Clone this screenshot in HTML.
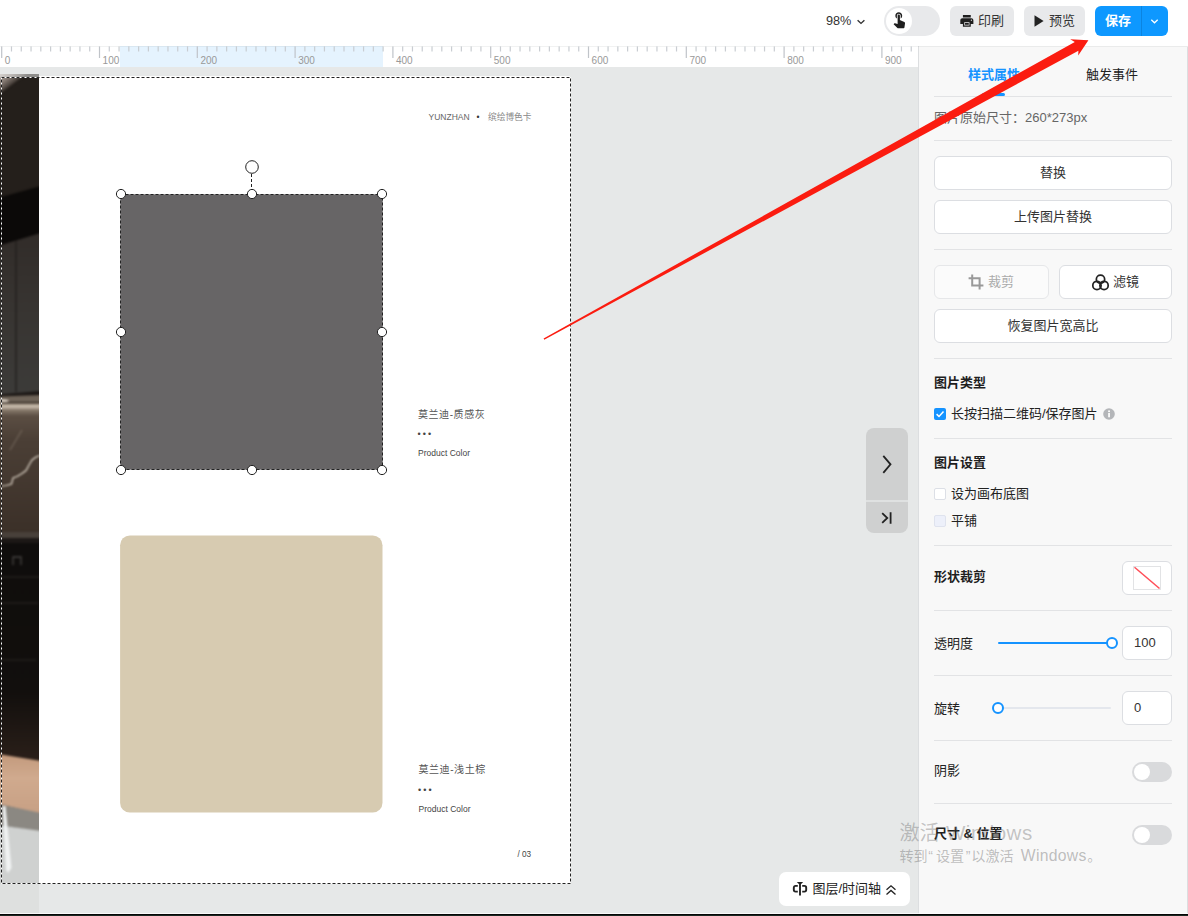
<!DOCTYPE html>
<html lang="zh-CN">
<head>
<meta charset="utf-8">
<title>编辑器</title>
<style>
*{box-sizing:border-box;margin:0;padding:0}
html,body{width:1188px;height:916px;overflow:hidden;background:#e6e8e8}
body{position:relative;font-family:"Liberation Sans","Noto Sans CJK SC",sans-serif;font-size:13px;color:#222;-webkit-font-smoothing:antialiased}
.abs{position:absolute}
/* ---------- top bar ---------- */
#topbar{position:absolute;left:0;top:0;width:1188px;height:46px;background:#fff}
#topline{position:absolute;left:0;top:46px;width:1188px;height:1px;background:rgba(120,125,130,.10)}
.tbtn{position:absolute;top:6px;height:30px;border-radius:6px;background:#e8e9eb;color:#333;font-size:13px;line-height:30px;white-space:nowrap}
#zoom{position:absolute;left:826px;top:6px;height:30px;line-height:30px;font-size:12.700px;color:#333}
#pill{position:absolute;left:884px;top:6px;width:56px;height:30px;border-radius:15px;background:#e8e9eb}
#pill i{position:absolute;left:2px;top:2px;width:26px;height:26px;border-radius:13px;background:#fff}
#save{position:absolute;left:1095px;top:6px;width:73px;height:30px;border-radius:6px;background:#0e98ff;color:#fff;font-size:13px;font-weight:bold;line-height:30px}
#save b{position:absolute;left:46px;top:0;width:1px;height:30px;background:#0b84e0}
/* ---------- ruler ---------- */
#ruler{position:absolute;left:0;top:46px;width:918px;height:21px;background:#fff;overflow:hidden}
#ruler .hl{position:absolute;left:120px;top:0;width:263px;height:21px;background:#e5f3fe}
/* ---------- stage ---------- */
#stage{position:absolute;left:0;top:67px;width:918px;height:849px;background:#e6e8e8;overflow:hidden}
#page{position:absolute;left:39px;top:9px;width:531px;height:808px;background:#fff}
/* ---------- panel ---------- */
#panel{position:absolute;left:918px;top:46px;width:270px;height:870px;background:#f8f8f8;border-left:1px solid #dcdee0}
.hr{position:absolute;left:15px;width:238px;height:1px;background:#e2e3e5}
.pbtn{position:absolute;height:34px;border:1px solid #dcdee2;border-radius:6px;background:#fff;color:#333;font-size:13px;line-height:32px;text-align:center;white-space:nowrap}
.lbl{position:absolute;left:15px;font-size:13px;line-height:20px;color:#222;white-space:nowrap}
.lbl.b{font-weight:bold;color:#1f1f1f}
.ptxt{position:absolute;white-space:nowrap;line-height:12px;height:12px}
#botline{position:absolute;left:0;top:913px;width:1188px;height:3px;background:linear-gradient(to bottom,rgba(255,255,255,.75) 0,rgba(255,255,255,.75) 1px,#060606 1px,#060606 2px,#1a2720 2px,#1a2720 3px)}
</style>
</head>
<body>
<div id="topbar">
  <div id="zoom">98%</div>
  <svg class="abs" style="left:856px;top:17.600px" width="10" height="8" viewBox="0 0 10 8"><path d="M1.6 2.2 L5 5.4 L8.4 2.2" fill="none" stroke="#333" stroke-width="1.4"/></svg>
  <div id="pill"><i></i>
    <svg class="abs" style="left:5.700px;top:4.300px" width="18.300" height="18.300" viewBox="0 0 24 24"><path fill="#1f1f1f" d="M9 11.240V7.500C9 6.120 10.120 5 11.500 5S14 6.120 14 7.500v3.740c1.210-.81 2-2.180 2-3.740C16 5.010 13.990 3 11.500 3S7 5.010 7 7.500c0 1.560.79 2.930 2 3.740zm9.840 4.630l-4.540-2.260c-.17-.07-.35-.11-.54-.11H13v-6c0-.83-.67-1.500-1.500-1.500S10 6.670 10 7.500v10.740l-3.430-.72c-.08-.01-.15-.03-.24-.03-.31 0-.59.13-.79.33l-.79.8 4.940 4.940c.27.27.65.44 1.060.44h6.790c.75 0 1.330-.55 1.440-1.280l.75-5.270c.01-.07.02-.14.020-.2 0-.62-.38-1.160-.91-1.380z"/></svg>
  </div>
  <div class="tbtn" style="left:950px;width:64px">
    <svg class="abs" style="left:8.500px;top:6.900px" width="15.700" height="15.700" viewBox="0 0 24 24"><path fill="#1f1f1f" d="M19 8H5c-1.660 0-3 1.340-3 3v6h4v4h12v-4h4v-6c0-1.660-1.340-3-3-3zm-3 11H8v-5h8v5zm3-7c-.55 0-1-.45-1-1s.45-1 1-1 1 .45 1 1-.45 1-1 1zm-1-9H6v4h12V3z"/><rect x="9" y="15.200" width="6" height="2.900" rx=".5" fill="#1f1f1f"/></svg>
    <span class="abs" style="left:28px;top:0">印刷</span>
  </div>
  <div class="tbtn" style="left:1024px;width:61px">
    <svg class="abs" style="left:10px;top:9px" width="10" height="12" viewBox="0 0 10 12"><path d="M0.500 0.300 L9.600 6 L0.500 11.700z" fill="#222"/></svg>
    <span class="abs" style="left:25px;top:0">预览</span>
  </div>
  <div id="save"><span class="abs" style="left:10px;top:0">保存</span><b></b>
    <svg class="abs" style="left:55px;top:12px" width="9" height="7" viewBox="0 0 9 7"><path d="M1.300 1.800 L4.500 4.800 L7.700 1.800" fill="none" stroke="#fff" stroke-width="1.300"/></svg>
  </div>
</div>
<div id="ruler"><div class="hl"></div><svg class="abs" style="left:0;top:0" width="918" height="21" viewBox="0 0 918 21" font-family="Liberation Sans, sans-serif" font-size="10" fill="#999"><path d="M11.48 0.5V5.5M21.26 0.5V5.5M31.04 0.5V5.5M40.82 0.5V5.5M50.60 0.5V5.5M60.38 0.5V5.5M70.16 0.5V5.5M79.94 0.5V5.5M89.72 0.5V5.5M109.28 0.5V5.5M119.06 0.5V5.5M128.84 0.5V5.5M138.62 0.5V5.5M148.40 0.5V5.5M158.18 0.5V5.5M167.96 0.5V5.5M177.74 0.5V5.5M187.52 0.5V5.5M207.08 0.5V5.5M216.86 0.5V5.5M226.64 0.5V5.5M236.42 0.5V5.5M246.20 0.5V5.5M255.98 0.5V5.5M265.76 0.5V5.5M275.54 0.5V5.5M285.32 0.5V5.5M304.88 0.5V5.5M314.66 0.5V5.5M324.44 0.5V5.5M334.22 0.5V5.5M344.00 0.5V5.5M353.78 0.5V5.5M363.56 0.5V5.5M373.34 0.5V5.5M383.12 0.5V5.5M402.68 0.5V5.5M412.46 0.5V5.5M422.24 0.5V5.5M432.02 0.5V5.5M441.80 0.5V5.5M451.58 0.5V5.5M461.36 0.5V5.5M471.14 0.5V5.5M480.92 0.5V5.5M500.48 0.5V5.5M510.26 0.5V5.5M520.04 0.5V5.5M529.82 0.5V5.5M539.60 0.5V5.5M549.38 0.5V5.5M559.16 0.5V5.5M568.94 0.5V5.5M578.72 0.5V5.5M598.28 0.5V5.5M608.06 0.5V5.5M617.84 0.5V5.5M627.62 0.5V5.5M637.40 0.5V5.5M647.18 0.5V5.5M656.96 0.5V5.5M666.74 0.5V5.5M676.52 0.5V5.5M696.08 0.5V5.5M705.86 0.5V5.5M715.64 0.5V5.5M725.42 0.5V5.5M735.20 0.5V5.5M744.98 0.5V5.5M754.76 0.5V5.5M764.54 0.5V5.5M774.32 0.5V5.5M793.88 0.5V5.5M803.66 0.5V5.5M813.44 0.5V5.5M823.22 0.5V5.5M833.00 0.5V5.5M842.78 0.5V5.5M852.56 0.5V5.5M862.34 0.5V5.5M872.12 0.5V5.5M891.68 0.5V5.5M901.46 0.5V5.5M911.24 0.5V5.5" stroke="#c9cdd2" stroke-width="1.200" fill="none"/><path d="M1.70 0.5V12M99.50 0.5V12M197.30 0.5V12M295.10 0.5V12M392.90 0.5V12M490.70 0.5V12M588.50 0.5V12M686.30 0.5V12M784.10 0.5V12M881.90 0.5V12" stroke="#c0c4c9" stroke-width="1.200" fill="none"/><text x="4.8" y="17.900">0</text><text x="102.6" y="17.900">100</text><text x="200.4" y="17.900">200</text><text x="298.2" y="17.900">300</text><text x="396.0" y="17.900">400</text><text x="493.8" y="17.900">500</text><text x="591.6" y="17.900">600</text><text x="689.4" y="17.900">700</text><text x="787.2" y="17.900">800</text><text x="885.0" y="17.900">900</text></svg></div>
<div id="stage">
  <div id="page"></div>
  <!-- photo strip on the left (kitchen photo, cropped) : global x0..39, y74..916 -->
  <svg class="abs" style="left:0;top:7px" width="39" height="842" viewBox="0 74 39 842" preserveAspectRatio="none">
    <defs>
      <filter id="bl" x="-20%" y="-5%" width="140%" height="110%" color-interpolation-filters="sRGB"><feGaussianBlur stdDeviation="0.8"/></filter>
      <linearGradient id="gcab" x1="0" y1="0" x2="0" y2="1"><stop offset="0" stop-color="#312c29"/><stop offset="0.5" stop-color="#383532"/><stop offset="1" stop-color="#3c3b39"/></linearGradient>
      <linearGradient id="gtop" gradientUnits="userSpaceOnUse" x1="0" y1="403" x2="0" y2="533"><stop offset="0" stop-color="#8a7d6e"/><stop offset="0.026" stop-color="#cfc3b4"/><stop offset="0.055" stop-color="#85786a"/><stop offset="0.100" stop-color="#5b4e43"/><stop offset="0.280" stop-color="#4b3f36"/><stop offset="1" stop-color="#3b3028"/></linearGradient>
      <linearGradient id="gcor" x1="0" y1="0" x2="1" y2="1"><stop offset="0" stop-color="#d6cbc3"/><stop offset="0.280" stop-color="#8a7f78"/><stop offset="0.520" stop-color="#3a332e"/><stop offset="0.800" stop-color="#241f1b"/></linearGradient>
      <linearGradient id="gblk" x1="0" y1="0" x2="0" y2="1"><stop offset="0" stop-color="#0f0d0c"/><stop offset="0.700" stop-color="#120f0d"/><stop offset="1" stop-color="#2a1f19"/></linearGradient>
      <linearGradient id="gwood" x1="0" y1="0" x2="0" y2="1"><stop offset="0" stop-color="#c39a7d"/><stop offset="0.400" stop-color="#d0aa8e"/><stop offset="1" stop-color="#c7a084"/></linearGradient>
    </defs>
    <rect x="0" y="74" width="39" height="842" fill="#241f1b"/>
    <g filter="url(#bl)">
      <polygon points="-2,72 29,72 -2,95" fill="url(#gcor)"/>
      <polygon points="-2,198 41,186 41,233 -2,246" fill="#0b0908"/>
      <polygon points="-2,246 41,233 41,392 -2,395" fill="url(#gcab)"/>
      <path d="M16 240V392" stroke="#1f1c1a" stroke-width="1.200"/>
      <polygon points="-2,394.500 41,391 41,395.500 -2,397" fill="#1c1715"/>
      <polygon points="-2,396.500 41,395 41,402.500 -2,403" fill="#6e6358"/>
      <ellipse cx="3" cy="400.800" rx="6" ry="1.300" fill="#f3eade"/>
      <rect x="-2" y="402" width="43" height="1.600" fill="#2b221c"/>
      <rect x="-2" y="403.300" width="43" height="130" fill="url(#gtop)"/>
      <polyline points="-1,486.500 6,485.500 11.500,484 13,478 17,476.500 22,473.500 26,470.500 29,465 32,460 36,457 40,455.500" fill="none" stroke="#e9e0d3" stroke-width="1.150"/>
      <path d="M22 430 L10 450" stroke="#85786c" stroke-width="0.800"/>
      <rect x="-2" y="532" width="43" height="228" fill="url(#gblk)"/>
      <rect x="-2" y="532" width="43" height="6" fill="#48403a"/>
      <rect x="-2" y="538" width="43" height="5" fill="#1c1816"/>
      <path d="M-2 577H41M-2 603H38M-2 660H36" stroke="#221f1d" stroke-width="1.600"/>
      <path d="M13 565V557H21V565" stroke="#444240" stroke-width="1.300" fill="none"/>
      <polygon points="-2,754 41,761 41,814 -2,804" fill="url(#gwood)"/>
      <polygon points="-2,804 41,813 41,832 -2,825" fill="#8b8882"/>
      <polygon points="-2,825 41,831 41,918 -2,918" fill="#cfd1d0"/>
      <polygon points="2.500,806 5.500,806 11.500,868 8,873 6,870" fill="#f1f3f3"/>
    </g>
    <rect x="0" y="74" width="39" height="3.500" fill="#e6e8e8" opacity="0.550"/>
    <rect x="0" y="884" width="39" height="32" fill="#e6e8e8" opacity="0.620"/>
  </svg>
  <!-- page dashed outline -->
  <svg class="abs" style="left:0;top:0" width="918" height="849" viewBox="0 67 918 849">
    <rect x="1.500" y="77.500" width="569" height="806" fill="none" stroke="#fff" stroke-width="1"/>
    <rect x="1.500" y="77.500" width="569" height="806" fill="none" stroke="#222" stroke-width="1" stroke-dasharray="3 2"/>
  </svg>
  <!-- colour swatches -->
  <div class="abs" style="left:120px;top:127px;width:263px;height:276px;background:#676566"></div>
  <svg class="abs" style="left:0;top:0" width="918" height="849" viewBox="0 67 918 849"><rect x="120.100" y="535.500" width="262.400" height="277" rx="9.800" fill="#d7cbb1"/></svg>
  <!-- selection frame + handles -->
  <svg class="abs" style="left:0;top:0" width="918" height="849" viewBox="0 67 918 849">
    <rect x="120.500" y="194.500" width="262" height="275" fill="none" stroke="#fff" stroke-opacity=".32" stroke-width="1"/><rect x="120.500" y="194.500" width="262" height="275" fill="none" stroke="#222" stroke-width="1" stroke-dasharray="3 2"/>
    <path d="M251.500 174V190" stroke="#222" stroke-width="1" stroke-dasharray="3 2"/>
    <g fill="#fff" stroke="#222" stroke-width="1">
      <circle cx="252" cy="167" r="6.300"/>
      <circle cx="121" cy="194" r="4.600"/><circle cx="252" cy="194" r="4.600"/><circle cx="382" cy="194" r="4.600"/>
      <circle cx="121" cy="332" r="4.600"/><circle cx="382" cy="332" r="4.600"/>
      <circle cx="121" cy="470" r="4.600"/><circle cx="252" cy="470" r="4.600"/><circle cx="382" cy="470" r="4.600"/>
    </g>
  </svg>
  <!-- page texts -->
  <div class="ptxt" style="left:428.500px;top:44px;font-size:8.500px;color:#666">YUNZHAN</div>
  <div class="ptxt" style="left:476.500px;top:44px;font-size:8.500px;color:#333">•</div>
  <div class="ptxt" style="left:488px;top:44px;font-size:8.700px;color:#888">缤绘博色卡</div>
  <div class="ptxt" style="left:418px;top:342px;font-size:10px;color:#555;letter-spacing:.56px">莫兰迪-质感灰</div>
  <div class="ptxt" style="left:417.500px;top:361px;font-size:9px;color:#444;letter-spacing:2.100px">•••</div>
  <div class="ptxt" style="left:418px;top:380px;font-size:8.500px;color:#444">Product Color</div>
  <div class="ptxt" style="left:418.500px;top:697px;font-size:10px;color:#555;letter-spacing:.56px">莫兰迪-浅土棕</div>
  <div class="ptxt" style="left:418px;top:716.500px;font-size:9px;color:#444;letter-spacing:2.100px">•••</div>
  <div class="ptxt" style="left:418.500px;top:736px;font-size:8.500px;color:#444">Product Color</div>
  <div class="ptxt" style="left:517.500px;top:782.400px;font-size:8.200px;color:#444">/ 03</div>
  <!-- collapse control -->
  <div class="abs" style="left:866px;top:361px;width:42px;height:105px;border-radius:8px;background:#cfd0d0">
    <div class="abs" style="left:0;top:72px;width:42px;height:2px;background:#dfe1e1"></div>
    <svg class="abs" style="left:14px;top:26px" width="14" height="20" viewBox="0 0 14 20"><path d="M3.300 1.800 L10.500 10.300 L3.300 18.800" fill="none" stroke="#222" stroke-width="1.800"/></svg>
    <svg class="abs" style="left:14px;top:82.700px" width="14" height="14" viewBox="0 0 14 14"><path d="M2.200 2.200 L7.300 7 L2.200 11.800 M10.600 1.300 V12.700" fill="none" stroke="#222" stroke-width="1.800"/></svg>
  </div>
  <!-- layers / timeline button -->
  <div class="abs" style="left:779px;top:805px;width:131px;height:34px;border-radius:7px;background:#fff">
    <svg class="abs" style="left:13px;top:9px" width="16" height="16" viewBox="0 0 16 16"><path d="M4.800 0.900h6.400l-2 2.200h-2.400z" fill="#222"/><path d="M8 2V14.600" stroke="#222" stroke-width="1.900" fill="none"/><path d="M5.800 4.900H3.600c-1.100 0-1.800.7-1.800 1.800v2.100c0 1.100.7 1.800 1.800 1.800h2.200M10.200 4.900h2.200c1.100 0 1.800.7 1.800 1.800v2.100c0 1.100-.7 1.800-1.800 1.800h-2.200" stroke="#222" stroke-width="1.900" fill="none"/></svg>
    <span class="abs" style="left:33.500px;top:7.500px;font-size:13px;line-height:18px;color:#222;white-space:nowrap">图层/时间轴</span>
    <svg class="abs" style="left:106px;top:11.800px" width="12" height="12" viewBox="0 0 12 12"><path d="M1.500 5.800 L6 1.800 L10.500 5.800 M1.500 10.400 L6 6.400 L10.500 10.400" fill="none" stroke="#222" stroke-width="1.300"/></svg>
  </div>
</div>
<div id="panel">
  <!-- tabs -->
  <div class="lbl b" style="left:49px;top:19px;color:#1593ff">样式属性</div>
  <div class="lbl" style="left:167px;top:19px">触发事件</div>
  <div class="abs" style="left:63px;top:47px;width:23px;height:3px;border-radius:2px;background:#1593ff"></div>
  <div class="hr" style="top:50px"></div>
  <div class="lbl" style="top:62px;color:#666">图片原始尺寸：260*273px</div>
  <div class="hr" style="top:94px"></div>
  <div class="pbtn" style="left:15px;top:110px;width:238px">替换</div>
  <div class="pbtn" style="left:15px;top:154px;width:238px">上传图片替换</div>
  <div class="hr" style="top:203px"></div>
  <div class="pbtn" style="left:15px;top:219px;width:115px;color:#aaa;background:#fbfbfb;border-color:#e6e7e9">
    <svg class="abs" style="left:33px;top:8px" width="16" height="16" viewBox="0 0 16 16"><path d="M4.200 0.600V11.600H15.400M0.600 4.200H11.600V15.400" fill="none" stroke="#999" stroke-width="2"/></svg>
    <span class="abs" style="left:53px;top:0">裁剪</span>
  </div>
  <div class="pbtn" style="left:140px;top:219px;width:113px">
    <svg class="abs" style="left:31px;top:6.500px" width="19" height="19" viewBox="-1 -1 19 19"><g fill="none" stroke="#222" stroke-width="1.750"><circle cx="8.500" cy="5.200" r="4.150"/><circle cx="4.950" cy="11.400" r="4.150"/><circle cx="12.050" cy="11.400" r="4.150"/></g></svg>
    <span class="abs" style="left:53px;top:0">滤镜</span>
  </div>
  <div class="pbtn" style="left:15px;top:263px;width:238px">恢复图片宽高比</div>
  <div class="hr" style="top:312px"></div>
  <div class="lbl b" style="top:327px">图片类型</div>
  <div class="abs" style="left:15px;top:362px;width:12px;height:12px;border-radius:2px;background:#1593ff">
    <svg class="abs" style="left:1px;top:1px" width="10" height="10" viewBox="0 0 10 10"><path d="M1.600 5.100 L4 7.500 L8.500 2.600" fill="none" stroke="#fff" stroke-width="1.500"/></svg>
  </div>
  <div class="lbl" style="left:32px;top:358px">长按扫描二维码/保存图片</div>
  <svg class="abs" style="left:184px;top:362px" width="12" height="12" viewBox="0 0 12 12"><circle cx="6" cy="6" r="5.800" fill="#b4b6b9"/><rect x="5.200" y="5" width="1.700" height="4.300" fill="#fff"/><circle cx="6.050" cy="3.200" r="1" fill="#fff"/></svg>
  <div class="hr" style="top:392px"></div>
  <div class="lbl b" style="top:407px">图片设置</div>
  <div class="abs" style="left:15px;top:442px;width:12px;height:12px;border-radius:2px;background:#fff;border:1px solid #dcdfe6"></div>
  <div class="lbl" style="left:32px;top:438px">设为画布底图</div>
  <div class="abs" style="left:15px;top:469px;width:12px;height:12px;border-radius:2px;background:#edf0fa;border:1px solid #dfe3ee"></div>
  <div class="lbl" style="left:32px;top:465px">平铺</div>
  <div class="hr" style="top:499px"></div>
  <div class="lbl b" style="top:521px">形状裁剪</div>
  <div class="pbtn" style="left:203px;top:515px;width:50px">
    <svg class="abs" style="left:10px;top:4px" width="29" height="25" viewBox="0 0 29 25"><rect x="0.500" y="0.500" width="27" height="23" fill="#fff" stroke="#e2e3e5"/><path d="M1.500 1.200 L26.500 22.500" stroke="#ff4d57" stroke-width="1.500"/></svg>
  </div>
  <div class="hr" style="top:564px"></div>
  <div class="lbl" style="top:588px">透明度</div>
  <div class="abs" style="left:79px;top:596px;width:113px;height:2px;background:#1593ff;border-radius:1px"></div>
  <div class="abs" style="left:187px;top:591px;width:12px;height:12px;border-radius:6px;background:#fff;border:2px solid #1593ff"></div>
  <div class="pbtn" style="left:203px;top:580px;width:50px;text-align:left;padding-left:11px">100</div>
  <div class="hr" style="top:629px"></div>
  <div class="lbl" style="top:653px">旋转</div>
  <div class="abs" style="left:79px;top:661px;width:113px;height:2px;background:#e4e7ed;border-radius:1px"></div>
  <div class="abs" style="left:73px;top:656px;width:12px;height:12px;border-radius:6px;background:#fff;border:2px solid #1593ff"></div>
  <div class="pbtn" style="left:203px;top:645px;width:50px;text-align:left;padding-left:11px">0</div>
  <div class="hr" style="top:694px"></div>
  <div class="lbl" style="top:715px">阴影</div>
  <div class="abs" style="left:213px;top:716px;width:40px;height:20px;border-radius:10px;background:#d9dadc"><i class="abs" style="left:2px;top:2px;width:16px;height:16px;border-radius:8px;background:#fff"></i></div>
  <div class="hr" style="top:757px"></div>
  <div class="lbl b" style="top:778px">尺寸 &amp; 位置</div>
  <div class="abs" style="left:213px;top:779px;width:40px;height:20px;border-radius:10px;background:#d9dadc"><i class="abs" style="left:2px;top:2px;width:16px;height:16px;border-radius:8px;background:#fff"></i></div>
  <div class="abs" style="left:268px;top:1px;width:1px;height:869px;background:#dcdee0"></div>
</div>
<div id="topline"></div>
<div id="botline"></div>
<!-- system watermark -->
<div id="wm1" class="abs" style="left:899.400px;top:818px;white-space:nowrap;color:rgba(96,96,96,.36);line-height:30px;font-size:20px"><span>激活</span><span style="font-size:20.500px;letter-spacing:.5px;margin-left:6.600px">Windows</span></div>
<div id="wm2" class="abs" style="left:899.400px;top:844.500px;white-space:nowrap;color:rgba(96,96,96,.40);line-height:22px;font-size:14.100px"><span>转到</span><span style="margin:0 3.100px 0 .6px">“</span><span>设置</span><span style="margin:0 1px 0 1.500px">”</span><span>以激活</span><span style="font-size:15.700px;letter-spacing:.3px;margin-left:7.200px">Windows</span><span style="margin-left:.6px">。</span></div>
<!-- annotation arrow -->
<svg class="abs" style="left:0;top:0;pointer-events:none" width="1188" height="916" viewBox="0 0 1188 916">
  <polygon points="543.600,338.550 1074.800,41.900 1070.200,39.300 1088.400,40.300 1078.200,55.400 1078.400,50.800 544.200,339.650" fill="#fb1c10"/>
</svg>
</body>
</html>
